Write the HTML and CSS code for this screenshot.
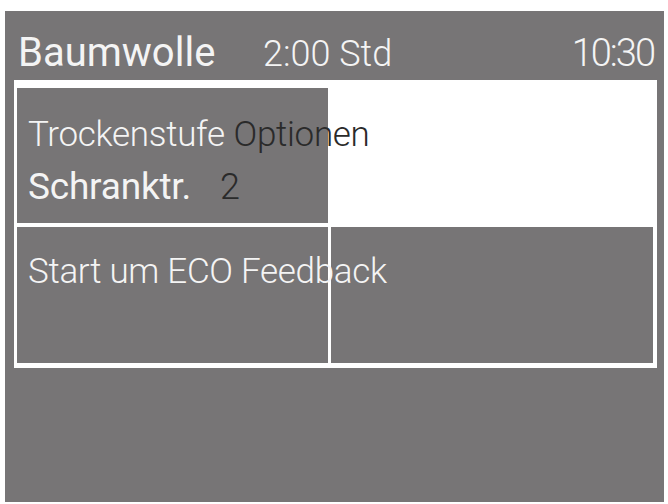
FILE: index.html
```html
<!DOCTYPE html>
<html lang="de">
<head>
<meta charset="utf-8">
<title>Baumwolle</title>
<link rel="stylesheet" href="styles.css">
</head>
<body>
<div class="screen">
  <header class="header">
    <span class="title">Baumwolle</span>
    <span class="duration">2:00 Std</span>
    <span class="clock">10:30</span>
  </header>
  <div class="panel">
    <div class="cell cell-dark front">
      <div class="line"><span class="light">Trockenstufe</span> <span class="dark light">Optionen</span></div>
      <div class="line"><span class="strong">Schranktr.</span><span class="value">2</span></div>
    </div>
    <div class="cell cell-white"></div>
    <div class="cell cell-dark bottom front">
      <div class="line"><span class="light">Start um ECO Feedback</span></div>
    </div>
    <div class="cell cell-dark bottom"></div>
  </div>
</div>
</body>
</html>
```

FILE: styles.css
```css
html, body {
  margin: 0;
  padding: 0;
  background: #ffffff;
}

body {
  font-family: Roboto, "Liberation Sans", sans-serif;
  color: #f4f4f4;
}

.screen {
  margin: 11px 0 0 5px;
  width: 659px;
  height: 491px;
  background: #777576;
  display: flex;
  flex-direction: column;
}

.header {
  height: 69px;
  box-sizing: border-box;
  padding: 18px 10px 0 13px;
  display: flex;
  align-items: baseline;
  line-height: normal;
  white-space: nowrap;
}

.title {
  font-size: 40px;
  font-weight: 400;
  width: 245px;
}

.duration {
  font-size: 36px;
  font-weight: 300;
}

.clock {
  margin-left: auto;
  font-size: 38px;
  font-weight: 300;
  letter-spacing: -2px;
}

.panel {
  margin-left: 9px;
  width: 643px;
  box-sizing: border-box;
  background: #ffffff;
  padding: 8px 4px 5px 3px;
  display: grid;
  grid-template-columns: 311px 1fr;
  grid-template-rows: 135px 136px;
  column-gap: 3px;
  row-gap: 4px;
}

.cell {
  box-sizing: border-box;
  padding: 21px 0 0 11px;
  font-size: 35px;
  line-height: 52px;
  white-space: nowrap;
  overflow: visible;
}

.cell.front {
  position: relative;
  z-index: 1;
}

.cell.bottom {
  padding-top: 19px;
}

.cell-dark {
  background: #777576;
}

.cell-white {
  background: #ffffff;
}

.light {
  font-weight: 300;
  letter-spacing: -0.3px;
}

.dark {
  color: #2a2a2a;
}

.strong {
  font-size: 37px;
  font-weight: 400;
  letter-spacing: -0.2px;
}

.value {
  margin-left: 29px;
  color: #2a2a2a;
  font-size: 36px;
  font-weight: 300;
}
```
